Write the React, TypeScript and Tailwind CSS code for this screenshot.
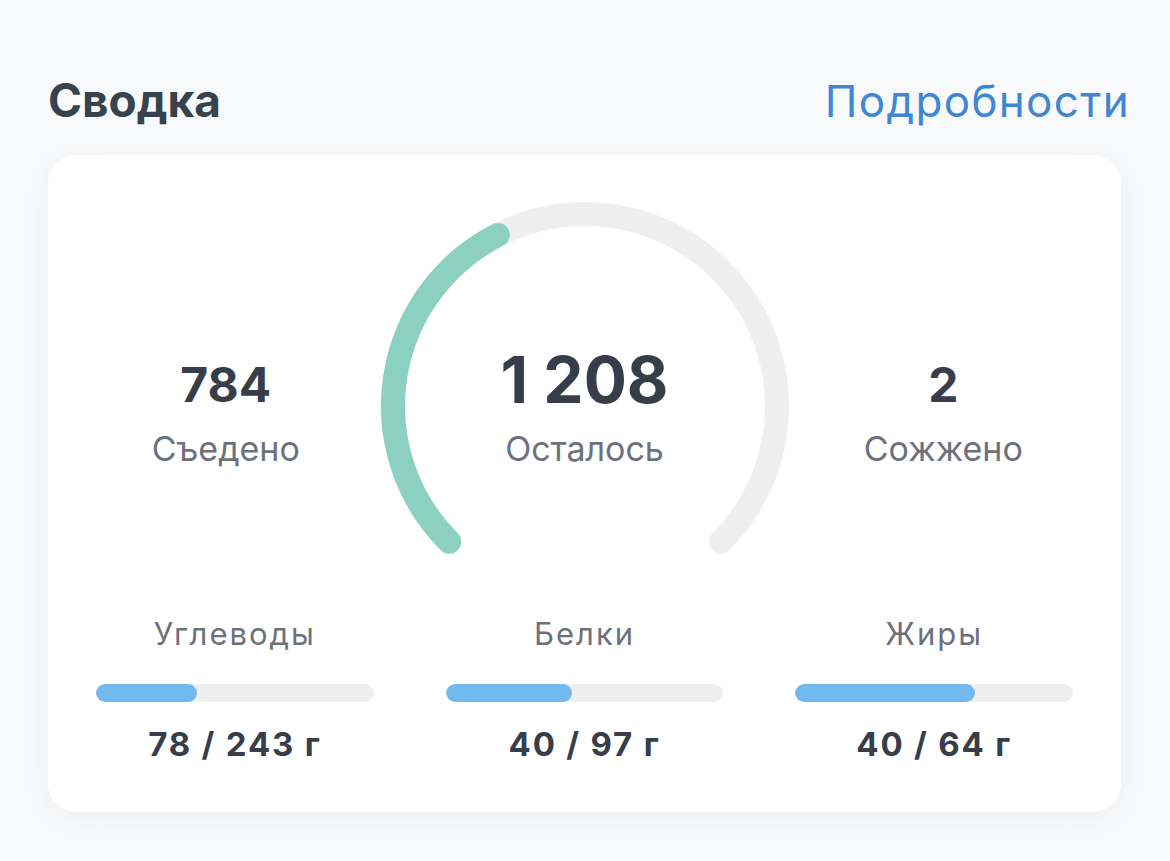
import React from 'react';

const font = { fontFamily: 'Inter, "Noto Sans", sans-serif' };

interface Macro {
  name: string;
  eaten: number;
  goal: number;
  fill: number;
}

const macros: Macro[] = [
  { name: 'Углеводы', eaten: 78, goal: 243, fill: 101 },
  { name: 'Белки', eaten: 40, goal: 97, fill: 126 },
  { name: 'Жиры', eaten: 40, goal: 64, fill: 180 },
];

function Gauge() {
  return (
    <div className="relative w-[408px] h-[356px]">
      <svg width="408" height="356" viewBox="0 0 408 356" className="absolute inset-0">
        <path
          d="M 68.24 339.76 A 192 192 0 1 1 339.76 339.76"
          fill="none"
          stroke="#efefef"
          strokeWidth="24"
          strokeLinecap="round"
        />
        <path
          d="M 68.24 339.76 A 192 192 0 0 1 116.83 32.93"
          fill="none"
          stroke="#8cd1bf"
          strokeWidth="24"
          strokeLinecap="round"
        />
      </svg>
      <div className="absolute inset-0 flex flex-col items-center pt-[146px]">
        <div className="text-[64px] leading-none font-bold text-[#383d4a]">1 208</div>
        <div className="mt-5 text-[34px] leading-none text-[#6d717c]">Осталось</div>
      </div>
    </div>
  );
}

function SideStat({ value, label }: { value: string; label: string }) {
  return (
    <div className="flex-1 flex flex-col items-center pt-[159px]">
      <div className="text-[48px] leading-none font-bold text-[#383d4a]">{value}</div>
      <div className="mt-[23px] text-[34px] leading-none text-[#6d717c]">{label}</div>
    </div>
  );
}

export default function App() {
  return (
    <div className="min-h-screen bg-[#f8f9fa] px-12 pt-[77px]" style={font}>
      <div className="flex items-baseline justify-between">
        <h2 className="text-[46px] leading-none font-bold text-[#36424d]">Сводка</h2>
        <button className="text-[44px] leading-none tracking-[1.3px] text-[#3f87d3] -mr-[8px]">
          Подробности
        </button>
      </div>

      <div className="mt-8 w-[1073px] bg-white rounded-[28px] shadow-[0_6px_28px_rgba(0,0,0,0.045)] px-12 pt-[47px] pb-[51px]">
        <div className="flex">
          <SideStat value="784" label="Съедено" />
          <div className="w-[458px] flex justify-center">
            <Gauge />
          </div>
          <SideStat value="2" label="Сожжено" />
        </div>

        <div className="mt-[60px] grid grid-cols-3 gap-[72px]">
          {macros.map((m) => (
            <div key={m.name} className="flex flex-col items-center">
              <div className="text-[31px] leading-none tracking-[2px] text-[#6d717c]">{m.name}</div>
              <div className="mt-[35px] w-full h-[18px] rounded-full bg-[#efefef] overflow-hidden">
                <div className="h-full rounded-full bg-[#72b9f0]" style={{ width: m.fill }} />
              </div>
              <div className="mt-[26px] text-[33px] leading-none font-bold tracking-[1.8px] text-[#383d4a]">
                {m.eaten} / {m.goal} г
              </div>
            </div>
          ))}
        </div>
      </div>
    </div>
  );
}
